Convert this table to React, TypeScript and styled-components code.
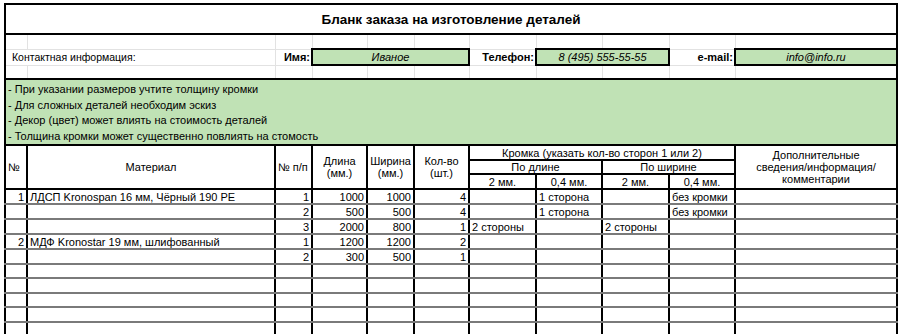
import React from 'react';
import styled, { createGlobalStyle } from 'styled-components';

const GlobalStyle = createGlobalStyle`
  html, body {
    margin: 0;
    padding: 0;
    background: #fff;
  }
  body {
    font-family: 'Liberation Sans', Arial, sans-serif;
    font-size: 11px;
    color: #000;
  }
`;

const Page = styled.div`
  box-sizing: border-box;
  height: 334px;
  overflow: hidden;
  padding: 3px 0 0 4px;
`;

const Sheet = styled.table`
  border-collapse: collapse;
  table-layout: fixed;
  width: 893px;
  border: 2px solid #000;
`;

const Line = styled.tr<{ $h: number }>`
  height: ${p => p.$h}px;
`;

const Title = styled.td`
  text-align: center;
  font-size: 13.5px;
  font-weight: bold;
  border-bottom: 2px solid #000;
`;

const GridCell = styled.td`
  border: 1px solid #e2e2e2;
  padding: 0;
`;

const ContactLabel = styled.td`
  border: 1px solid #e2e2e2;
  padding: 0 0 0 6px;
  font-size: 10.5px;
  white-space: nowrap;
`;

const FieldLabel = styled.td`
  border: 1px solid #e2e2e2;
  padding: 0 1px 0 0;
  text-align: right;
  font-weight: bold;
  white-space: nowrap;
`;

const FieldBox = styled.td`
  border: 2px solid #000;
  background: #c0e2b5;
  text-align: center;
  font-style: italic;
  padding: 0;
`;

const Notes = styled.td`
  border-top: 2px solid #000;
  border-bottom: 2px solid #000;
  background: #c0e2b5;
  padding: 2px 0 0 2px;
  vertical-align: top;
`;

const NoteLine = styled.div`
  height: 15.5px;
  line-height: 15px;
  white-space: nowrap;
`;

const HeadCell = styled.th<{ $align?: 'left' | 'center' }>`
  border: 2px solid #000;
  font-weight: normal;
  text-align: ${p => p.$align ?? 'center'};
  vertical-align: middle;
  padding: 0 2px;
  line-height: 12px;
  white-space: nowrap;
`;

const DataCell = styled.td<{ $align?: 'left' | 'right' }>`
  border-left: 2px solid #000;
  border-right: 2px solid #000;
  border-bottom: 2px solid #7a7a7a;
  text-align: ${p => p.$align ?? 'left'};
  padding: 1px 2px 0;
  line-height: 12px;
  white-space: nowrap;
  overflow: hidden;
`;

type Row = {
  n?: string;
  mat?: string;
  pp?: string;
  len?: string;
  wid?: string;
  qty?: string;
  l2?: string;
  l04?: string;
  w2?: string;
  w04?: string;
};

const widths = [22, 248, 37, 55, 47, 55, 67, 66, 67, 66, 162];

const rows: Row[] = [
  { n: '1', mat: 'ЛДСП Kronospan 16 мм, Чёрный 190 PE', pp: '1', len: '1000', wid: '1000', qty: '4', l04: '1 сторона', w04: 'без кромки' },
  { pp: '2', len: '500', wid: '500', qty: '4', l04: '1 сторона', w04: 'без кромки' },
  { pp: '3', len: '2000', wid: '800', qty: '1', l2: '2 стороны', w2: '2 стороны' },
  { n: '2', mat: 'МДФ Kronostar 19 мм, шлифованный', pp: '1', len: '1200', wid: '1200', qty: '2' },
  { pp: '2', len: '300', wid: '500', qty: '1' },
  {}, {}, {}, {}, {}, {},
];

const notes = [
  '- При указании размеров учтите толщину кромки',
  '- Для сложных деталей необходим эскиз',
  '- Декор (цвет) может влиять на стоимость деталей',
  '- Толщина кромки может существенно повлиять на стомость',
];

const Spacer: React.FC<{ h: number }> = ({ h }) => (
  <Line $h={h}>
    {widths.map((_, i) => <GridCell key={i} />)}
  </Line>
);

export default function App() {
  return (
    <Page>
      <GlobalStyle />
      <Sheet>
        <colgroup>
          {widths.map((w, i) => <col key={i} style={{ width: w }} />)}
        </colgroup>
        <tbody>
          <Line $h={30}>
            <Title colSpan={11}>Бланк заказа на изготовление деталей</Title>
          </Line>
          <Spacer h={15} />
          <Line $h={16}>
            <ContactLabel colSpan={2}>Контактная информация:</ContactLabel>
            <FieldLabel>Имя:</FieldLabel>
            <FieldBox colSpan={3}>Иваное</FieldBox>
            <FieldLabel>Телефон:</FieldLabel>
            <FieldBox colSpan={2}>8 (495) 555-55-55</FieldBox>
            <FieldLabel>e-mail:</FieldLabel>
            <FieldBox>info@info.ru</FieldBox>
          </Line>
          <Spacer h={14} />
          <Line $h={64}>
            <Notes colSpan={11}>
              {notes.map(t => <NoteLine key={t}>{t}</NoteLine>)}
            </Notes>
          </Line>
          <Line $h={15}>
            <HeadCell rowSpan={3} $align="left">№</HeadCell>
            <HeadCell rowSpan={3}>Материал</HeadCell>
            <HeadCell rowSpan={3} $align="left">№ п/п</HeadCell>
            <HeadCell rowSpan={3}>Длина<br />(мм.)</HeadCell>
            <HeadCell rowSpan={3}>Ширина<br />(мм.)</HeadCell>
            <HeadCell rowSpan={3}>Кол-во<br />(шт.)</HeadCell>
            <HeadCell colSpan={4}>Кромка (указать кол-во сторон 1 или 2)</HeadCell>
            <HeadCell rowSpan={3}>Дополнительные<br />сведения/информация/<br />комментарии</HeadCell>
          </Line>
          <Line $h={14}>
            <HeadCell colSpan={2}>По длине</HeadCell>
            <HeadCell colSpan={2}>По ширине</HeadCell>
          </Line>
          <Line $h={15}>
            <HeadCell>2 мм.</HeadCell>
            <HeadCell>0,4 мм.</HeadCell>
            <HeadCell>2 мм.</HeadCell>
            <HeadCell>0,4 мм.</HeadCell>
          </Line>
          {rows.map((r, i) => (
            <Line key={i} $h={14.4}>
              <DataCell $align="right">{r.n}</DataCell>
              <DataCell>{r.mat}</DataCell>
              <DataCell $align="right">{r.pp}</DataCell>
              <DataCell $align="right">{r.len}</DataCell>
              <DataCell $align="right">{r.wid}</DataCell>
              <DataCell $align="right">{r.qty}</DataCell>
              <DataCell>{r.l2}</DataCell>
              <DataCell>{r.l04}</DataCell>
              <DataCell>{r.w2}</DataCell>
              <DataCell>{r.w04}</DataCell>
              <DataCell />
            </Line>
          ))}
        </tbody>
      </Sheet>
    </Page>
  );
}
